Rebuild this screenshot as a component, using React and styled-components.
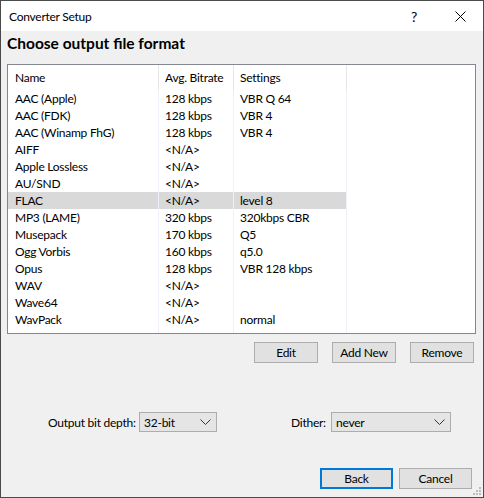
import React from "react";
import styled, { createGlobalStyle } from "styled-components";

const Global = createGlobalStyle`
  html, body { margin: 0; padding: 0; background: #f0f0f0; }
  * { box-sizing: border-box; }
`;

const FONT = `Lato, "Liberation Sans", Arial, sans-serif`;

const Window = styled.div`
  position: relative;
  width: 484px;
  height: 498px;
  border: 1px solid #4a4a4a;
  background: #f0f0f0;
  display: flex;
  flex-direction: column;
  font-family: ${FONT};
  font-size: 12px;
  letter-spacing: -0.25px;
  color: #000;
`;

const TitleBar = styled.div`
  height: 30px;
  background: #fff;
  display: flex;
  align-items: center;
`;

const Title = styled.div`
  flex: 1;
  padding-left: 8px;
  font-size: 12px;
`;

const CaptionButton = styled.div`
  width: 46px;
  height: 30px;
  display: flex;
  align-items: center;
  justify-content: center;
  font-size: 14px;
`;

const Body = styled.div`
  flex: 1;
  display: flex;
  flex-direction: column;
  padding: 0 7px 0 6px;
`;

const Heading = styled.h1`
  margin: 2px 0 0 0;
  font-size: 15.5px;
  line-height: 20px;
  font-weight: 700;
  letter-spacing: 0;
`;

const ListBox = styled.div`
  margin-top: 11px;
  height: 270px;
  border: 1px solid #828790;
  background: #fff;
  display: grid;
  grid-template-columns: 151px 75px 113px 1fr;
  grid-template-rows: 25px repeat(14, 17px) 1fr;
`;

const HeaderCell = styled.div`
  display: flex;
  align-items: center;
  padding-left: ${(p) => p.$pad || 6}px;
  border-right: ${(p) => (p.$last ? "none" : "1px solid #e5e5e5")};
`;

const Cell = styled.div`
  display: flex;
  align-items: center;
  padding-left: ${(p) => p.$pad || 6}px;
  background: ${(p) => (p.$selected ? "#d9d9d9" : "transparent")};
  border-right: ${(p) => (p.$last ? "none" : "1px solid #eef2f8")};
  white-space: nowrap;
`;

const FillerCell = styled.div`
  border-right: ${(p) => (p.$last ? "none" : "1px solid #eef2f8")};
`;

const ButtonRow = styled.div`
  margin-top: 8px;
  display: flex;
  justify-content: flex-end;
  gap: 14px;
  padding-right: 2px;
`;

const Button = styled.button`
  width: ${(p) => p.$w || 64}px;
  height: 21px;
  padding: 0;
  border: ${(p) => (p.$default ? "2px solid #0078d7" : "1px solid #adadad")};
  background: #e1e1e1;
  font-family: ${FONT};
  font-size: 12px;
  letter-spacing: -0.25px;
  color: #000;
`;

const SelectRow = styled.div`
  margin-top: 49px;
  display: grid;
  grid-template-columns: 91px 78px 74px 40px 120px;
  align-items: center;
  padding-left: 41px;
`;

const Label = styled.span`
  font-size: 12px;
  white-space: nowrap;
`;

const Select = styled.div`
  height: 20px;
  border: 1px solid #adadad;
  background: #e5e5e5;
  display: flex;
  align-items: center;
  justify-content: space-between;
  padding: 0 5px 0 4px;
`;

const Footer = styled.div`
  margin-top: 36px;
  display: flex;
  justify-content: flex-end;
  gap: 6px;
  padding-right: 4px;
`;

const Grip = styled.svg`
  position: absolute;
  right: 1px;
  bottom: 1px;
`;

const Chevron = () => (
  <svg width="11" height="6" viewBox="0 0 11 6">
    <path d="M0.5 0.5 L5.5 5.5 L10.5 0.5" fill="none" stroke="#333" strokeWidth="1" />
  </svg>
);

const rows = [
  ["AAC (Apple)", "128 kbps", "VBR Q 64"],
  ["AAC (FDK)", "128 kbps", "VBR 4"],
  ["AAC (Winamp FhG)", "128 kbps", "VBR 4"],
  ["AIFF", "<N/A>", ""],
  ["Apple Lossless", "<N/A>", ""],
  ["AU/SND", "<N/A>", ""],
  ["FLAC", "<N/A>", "level 8"],
  ["MP3 (LAME)", "320 kbps", "320kbps CBR"],
  ["Musepack", "170 kbps", "Q5"],
  ["Ogg Vorbis", "160 kbps", "q5.0"],
  ["Opus", "128 kbps", "VBR 128 kbps"],
  ["WAV", "<N/A>", ""],
  ["Wave64", "<N/A>", ""],
  ["WavPack", "<N/A>", "normal"],
];

export default function App() {
  return (
    <>
      <Global />
      <Window>
        <TitleBar>
          <Title>Converter Setup</Title>
          <CaptionButton>?</CaptionButton>
          <CaptionButton>
            <svg width="11" height="11" viewBox="0 0 11 11">
              <path d="M0.5 0.5 L10.5 10.5 M10.5 0.5 L0.5 10.5" stroke="#000" strokeWidth="1" />
            </svg>
          </CaptionButton>
        </TitleBar>
        <Body>
          <Heading>Choose output file format</Heading>
          <ListBox>
            <HeaderCell $pad={7}>Name</HeaderCell>
            <HeaderCell>Avg. Bitrate</HeaderCell>
            <HeaderCell>Settings</HeaderCell>
            <HeaderCell $last />
            {rows.map((r, i) => {
              const sel = r[0] === "FLAC";
              return (
                <React.Fragment key={i}>
                  <Cell $pad={7} $selected={sel}>{r[0]}</Cell>
                  <Cell $selected={sel}>{r[1]}</Cell>
                  <Cell $selected={sel}>{r[2]}</Cell>
                  <Cell $last />
                </React.Fragment>
              );
            })}
            <FillerCell />
            <FillerCell />
            <FillerCell />
            <FillerCell $last />
          </ListBox>
          <ButtonRow>
            <Button>Edit</Button>
            <Button>Add New</Button>
            <Button>Remove</Button>
          </ButtonRow>
          <SelectRow>
            <Label>Output bit depth:</Label>
            <Select>
              <span>32-bit</span>
              <Chevron />
            </Select>
            <span />
            <Label>Dither:</Label>
            <Select>
              <span>never</span>
              <Chevron />
            </Select>
          </SelectRow>
          <Footer>
            <Button $default $w={73}>Back</Button>
            <Button $w={73}>Cancel</Button>
          </Footer>
        </Body>
        <Grip width="10" height="10" viewBox="0 0 10 10">
          {[[7, 1], [4, 4], [7, 4], [1, 7], [4, 7], [7, 7]].map(([x, y], i) => (
            <rect key={i} x={x} y={y} width="2" height="2" fill="#bcbcbc" />
          ))}
        </Grip>
      </Window>
    </>
  );
}
